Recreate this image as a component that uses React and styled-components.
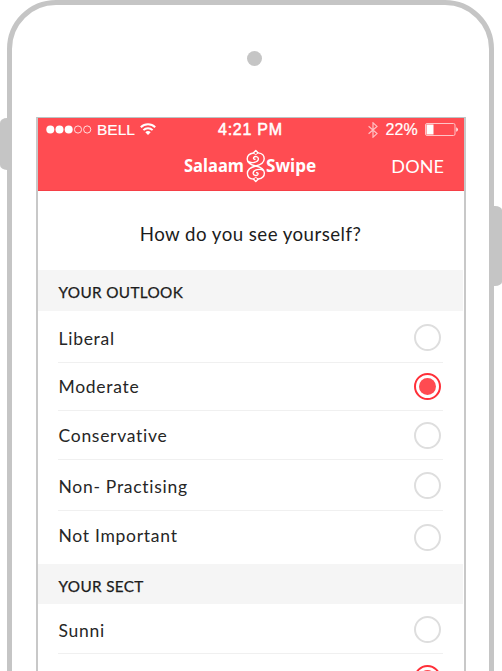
import React from "react";
import styled, { createGlobalStyle } from "styled-components";

const Global = createGlobalStyle`
  * { box-sizing: border-box; }
  html, body { margin: 0; height: 671px; overflow: hidden; background: #fff; }
`;

const Stage = styled.div`
  position: relative;
  width: 502px;
  height: 671px;
  overflow: hidden;
  background: #fff;
`;

const SideButton = styled.div`
  position: absolute;
  top: ${(p) => p.$top}px;
  ${(p) => p.$side}: 0;
  width: 9px;
  height: ${(p) => p.$height}px;
  background: #c5c5c5;
  border-radius: ${(p) => (p.$side === "left" ? "7px 0 0 7px / 5px 0 0 5px" : "0 7px 7px 0 / 0 4px 4px 0")};
`;

const Phone = styled.div`
  position: relative;
  margin-left: 7px;
  width: 487px;
  height: 760px;
  border: 5px solid #c5c5c5;
  border-radius: 49px;
  background: #fff;
  display: flex;
  flex-direction: column;
`;

const Bezel = styled.div`
  height: 112px;
  padding: 46px 0 0 235px;
`;

const Camera = styled.div`
  width: 15px;
  height: 15px;
  border-radius: 50%;
  background: #c5c5c5;
`;

const Screen = styled.main`
  margin-left: 24px;
  width: 430px;
  flex: 1;
  border: 2px solid #c8c8c8;
  border-top: 1px solid #b9c5c5;
  font-family: Lato, sans-serif;
  color: #1c1c1c;
`;

const Header = styled.header`
  height: 73px;
  background: #ff4c52;
  border-bottom: 1px solid #f53f46;
  color: #fff;
`;

const StatusBar = styled.div`
  height: 23px;
  display: grid;
  grid-template-columns: 172px 1fr auto;
  align-items: center;
  padding: 0 5px 0 8px;
  font: 16px/23px "Liberation Sans", sans-serif;
`;

const StatusGroup = styled.div`
  display: flex;
  align-items: center;
  gap: ${(p) => p.$gap}px;
`;

const Label = styled.span`
  white-space: pre;
  font-weight: ${(p) => p.$weight || 400};
  font-size: ${(p) => p.$size}px;
  letter-spacing: ${(p) => p.$track || 0}px;
  -webkit-text-stroke: ${(p) => p.$stroke || 0}px currentColor;
`;

const NavBar = styled.div`
  height: 49px;
  display: flex;
  align-items: center;
  padding: 0 20px 0 146px;
`;

const Brand = styled.div`
  display: flex;
  align-items: center;
  height: 34px;
  font-family: "Noto Sans", sans-serif;
`;

const BrandWord = styled.span`
  width: ${(p) => p.$width}px;
  margin-top: -2px;
  white-space: pre;
  font-size: 18px;
  font-weight: 700;
  transform: scaleX(${(p) => p.$scale});
  transform-origin: left;
`;

const Done = styled.button`
  margin: 1px 0 0 auto;
  padding: 0;
  border: 0;
  background: none;
  color: #fff;
  font: 18px/24px Lato, sans-serif;
  letter-spacing: 0.1px;
`;

const Question = styled.h1`
  margin: 0;
  height: 79px;
  padding: 7px 1px 0 0;
  display: flex;
  align-items: center;
  justify-content: center;
  font-weight: 400;
`;

const SectionTitle = styled.h2`
  margin: 0 1px 0 0;
  height: ${(p) => p.$height}px;
  padding: 3px 0 0 20.5px;
  display: flex;
  align-items: center;
  background: #f5f5f5;
  font-weight: 400;
`;

const Option = styled.label`
  display: flex;
  justify-content: space-between;
  align-items: flex-start;
  margin: 0 21px 0 20px;
  height: ${(p) => p.$height}px;
  border-bottom: ${(p) => (p.$last ? "0" : "1px solid #f0f0f0")};
`;

const OptionText = styled.span`
  margin: ${(p) => p.$offset}px 0 0 0.5px;
  font-size: 17.5px;
  line-height: 22px;
  letter-spacing: 0.72px;
  color: #262626;
`;

const Radio = styled.span`
  width: 27px;
  height: 27px;
  margin: ${(p) => p.$offset}px 2px 0 auto;
  border-radius: 50%;
  border: 2px solid ${(p) => (p.$on ? "#ff2f38" : "#dedede")};
  padding: 3px;
  &::after {
    content: "";
    display: block;
    width: 17px;
    height: 17px;
    border-radius: 50%;
    background: ${(p) => (p.$on ? "#ff4b51" : "transparent")};
  }
`;

const outlook = [
  { name: "Liberal", height: 52, text: 17, radio: 13 },
  { name: "Moderate", height: 48, text: 13, radio: 10, on: true },
  { name: "Conservative", height: 49, text: 14, radio: 11 },
  { name: "Non- Practising", height: 51, text: 16, radio: 12 },
  { name: "Not Important", height: 53, text: 14, radio: 13, last: true },
];

const sect = [
  { name: "Sunni", height: 50, text: 16, radio: 12 },
  { name: "", height: 50, text: 16, radio: 11, on: true },
];

function Options({ items }) {
  return items.map((o) => (
    <Option key={o.name} $height={o.height} $last={o.last}>
      {o.name && <OptionText $offset={o.text}>{o.name}</OptionText>}
      <Radio $offset={o.radio} $on={o.on} />
    </Option>
  ));
}

function Signal() {
  return (
    <svg width="46" height="10" viewBox="0 0 46 10" fill="#fff" stroke="#fff">
      {[4.3, 13.5, 22.7].map((x) => <circle key={x} cx={x} cy="4.5" r="4" stroke="none" />)}
      {[32, 41.2].map((x) => <circle key={x} cx={x} cy="4.5" r="3.6" fill="none" strokeWidth=".8" />)}
    </svg>
  );
}

function Wifi() {
  return (
    <svg width="16" height="13" viewBox="0 0 16 13" fill="none" stroke="#fff" strokeWidth="2">
      <path d="M.8 4.2a10.3 10.3 0 0 1 14.4 0M3.4 7.1a6.6 6.6 0 0 1 9.2 0" />
      <path d="M8 12.1 5.3 9.3a3.9 3.9 0 0 1 5.4 0z" fill="#fff" stroke="none" />
    </svg>
  );
}

function Bluetooth() {
  return (
    <svg width="10" height="16" viewBox="0 0 10 16" fill="none" stroke="#fff" strokeOpacity=".65" strokeWidth="1.2">
      <path d="M.6 4.2 9 11.6 5 15.2V.8l4 3.6-8.4 7.4" />
    </svg>
  );
}

function Battery() {
  return (
    <svg width="34" height="13" viewBox="0 0 34 13">
      <rect x=".5" y=".5" width="29.5" height="12" rx="1.5" fill="none" stroke="#ffc4c6" />
      <rect x="1.5" y="1.5" width="7" height="10" fill="#fff" />
      <path d="M31.3 4.2a2.5 2.5 0 0 1 0 4.6z" fill="#fff" />
    </svg>
  );
}

const curl =
  "M9.8 17C14.6 15.8 18.2 13.4 18.2 9.8C18.2 6.4 15.6 4.2 12.2 3.9L9.8 1.4L7.3 4C3.8 4.5 1.2 6.8 1.2 10C1.2 13 4.6 15.8 9.8 17M2 12.4C5 14.6 12.6 13.6 12.4 9.6C12.2 7.4 9 6.8 7.8 8.4C7.2 9.5 7.9 10.5 9 10.3";

function Knot() {
  return (
    <svg width="20" height="34" viewBox="0 0 20 34" fill="none" stroke="#fff" strokeWidth="1.4" strokeLinecap="round" strokeLinejoin="round">
      <path d={curl} />
      <path d={curl} transform="rotate(180 9.8 17)" />
      <path d="M7.3 4 9.8 5.6 12.2 3.9M7.3 30 9.8 28.4 12.2 30.1" strokeWidth="1" />
    </svg>
  );
}

export default function App() {
  return (
    <Stage>
      <Global />
      <SideButton $side="left" $top={118} $height={52} />
      <SideButton $side="right" $top={206} $height={80} />
      <Phone>
        <Bezel><Camera /></Bezel>
        <Screen>
          <Header>
            <StatusBar>
              <StatusGroup $gap={5}>
                <Signal />
                <Label $size={15.5} $stroke={0.2}>BELL</Label>
                <Wifi />
              </StatusGroup>
              <Label $size={16} $track={0.75} $stroke={0.5}>4:21 PM</Label>
              <StatusGroup $gap={7}>
                <Bluetooth />
                <Label $size={16} $track={0.2} $stroke={0.2}>22%</Label>
                <Battery />
              </StatusGroup>
            </StatusBar>
            <NavBar>
              <Brand>
                <BrandWord $width={62} $scale={0.92}>Salaam</BrandWord>
                <Knot />
                <BrandWord $width={52} $scale={0.95}>Swipe</BrandWord>
              </Brand>
              <Done>DONE</Done>
            </NavBar>
          </Header>
          <Question><Label $size={18.7} $track={0.45}>How do you see yourself?</Label></Question>
          <SectionTitle $height={41}><Label $size={15.3} $track={0.35} $stroke={0.25}>YOUR OUTLOOK</Label></SectionTitle>
          <Options items={outlook} />
          <SectionTitle $height={40}><Label $size={15.3} $track={0.35} $stroke={0.25}>YOUR SECT</Label></SectionTitle>
          <Options items={sect} />
        </Screen>
      </Phone>
    </Stage>
  );
}
